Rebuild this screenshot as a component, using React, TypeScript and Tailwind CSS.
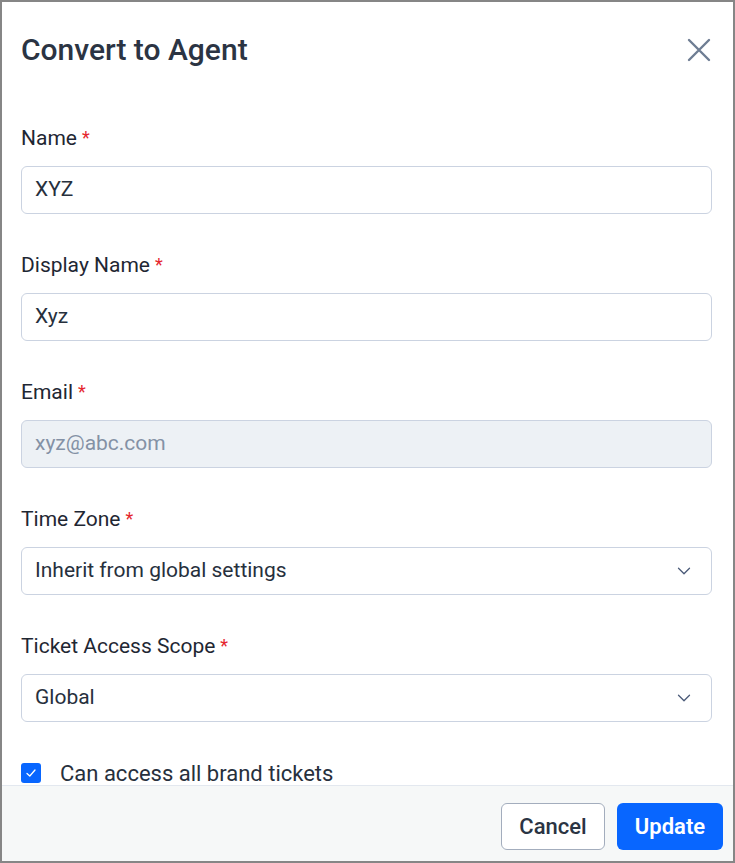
import { ChevronDown } from "lucide-react";

function Label({ text }: { text: string }) {
  return (
    <div className="h-6 flex items-center text-[21px] text-[#1f2733] leading-6">
      {text}
      <span className="ml-[5px] text-[#e5262e] text-[18px]">*</span>
    </div>
  );
}

function TextField({ label, value, disabled }: { label: string; value: string; disabled?: boolean }) {
  return (
    <div>
      <Label text={label} />
      <div
        className={`mt-4 h-12 rounded-[6px] border border-[#cbd3e1] px-[13px] flex items-center text-[21px] ${
          disabled ? "bg-[#edf1f5] text-[#8491a5]" : "bg-white text-[#27303d]"
        }`}
      >
        {value}
      </div>
    </div>
  );
}

function SelectField({ label, value }: { label: string; value: string }) {
  return (
    <div>
      <Label text={label} />
      <div className="mt-4 h-12 rounded-[6px] border border-[#cbd3e1] bg-white pl-[13px] pr-[16px] flex items-center justify-between text-[21px] text-[#27303d]">
        <span>{value}</span>
        <ChevronDown size={22} strokeWidth={1.4} className="text-[#4a5a78]" />
      </div>
    </div>
  );
}

export default function App() {
  return (
    <div
      className="w-[735px] h-[863px] border-2 border-[#868686] bg-white flex flex-col overflow-hidden"
      style={{ fontFamily: "Roboto, 'Noto Sans', sans-serif" }}
    >
      <div className="flex items-center justify-between pl-[19px] pr-[21px] pt-8">
        <h2 className="text-[30px] leading-8 font-medium text-[#2b3443]">Convert to Agent</h2>
        <button className="w-[26px] h-[26px] flex items-center justify-center text-[#6e7d93]">
          <svg width="24" height="24" viewBox="0 0 24 24" fill="none" stroke="currentColor" strokeWidth="2.4" strokeLinecap="round">
            <path d="M2 2 22 22M22 2 2 22" />
          </svg>
        </button>
      </div>

      <div className="flex-1 overflow-hidden pl-[19px] pr-[21px] pt-[60px] flex flex-col gap-[39px]">
        <TextField label="Name" value="XYZ" />
        <TextField label="Display Name" value="Xyz" />
        <TextField label="Email" value="xyz@abc.com" disabled />
        <SelectField label="Time Zone" value="Inherit from global settings" />
        <SelectField label="Ticket Access Scope" value="Global" />
        <label className="h-6 flex items-center gap-[19px] text-[22px] text-[#27303d]">
          <span className="w-5 h-5 rounded-[3px] bg-[#0866ff] flex items-center justify-center">
            <svg width="12" height="12" viewBox="0 0 12 12" fill="none" stroke="white" strokeWidth="1.3" strokeLinecap="round" strokeLinejoin="round">
              <path d="M2 6.5 4.8 9 10 3" />
            </svg>
          </span>
          Can access all brand tickets
        </label>
      </div>

      <div className="h-[76px] shrink-0 border-t border-[#e3e8ef] bg-[#f6f8f8] flex items-start justify-end gap-3 pt-[17px] pr-[10px]">
        <button className="h-[47px] w-[104px] rounded-[6px] border border-[#a3adbd] bg-white text-[22px] font-medium text-[#2b3443]">
          Cancel
        </button>
        <button className="h-[47px] w-[106px] rounded-[6px] bg-[#0866ff] text-[22px] font-semibold text-white">
          Update
        </button>
      </div>
    </div>
  );
}
